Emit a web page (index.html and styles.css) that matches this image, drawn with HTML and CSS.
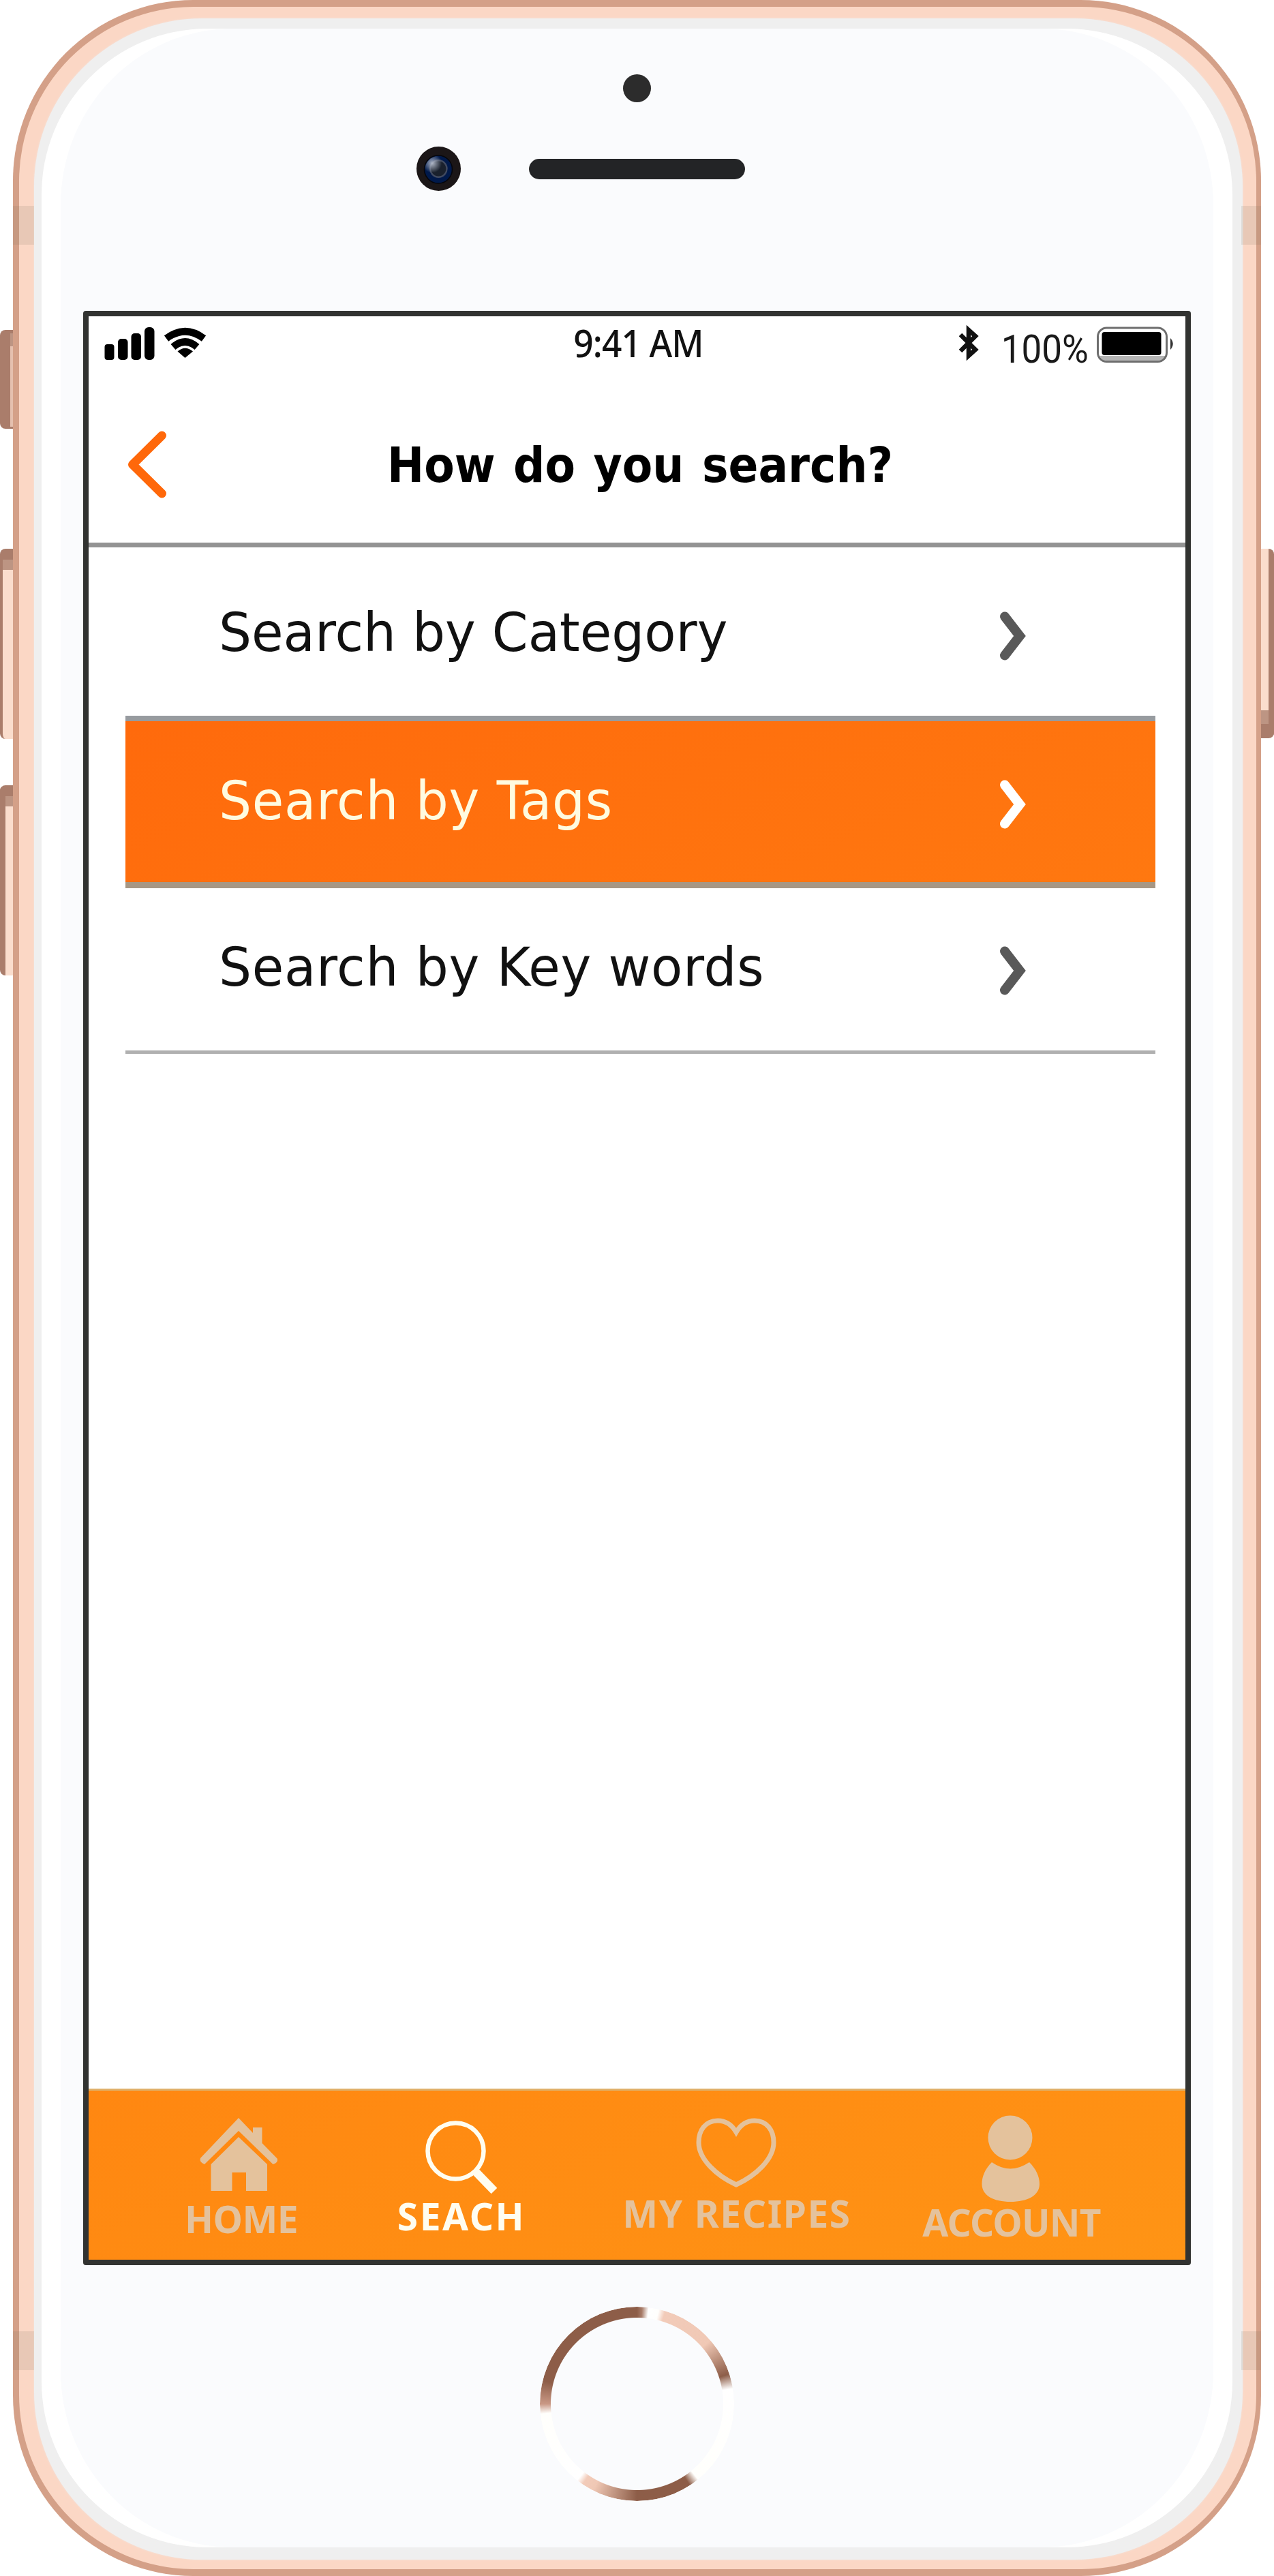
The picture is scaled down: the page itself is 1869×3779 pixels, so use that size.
FILE: index.html
```
<!DOCTYPE html>
<html lang="en">
<head>
<meta charset="utf-8">
<title>How do you search?</title>
<link rel="stylesheet" href="styles.css">
</head>
<body>
<div class="device">
  <span class="key key-mute"></span>
  <span class="key key-up"></span>
  <span class="key key-down"></span>
  <span class="key key-power"></span>
  <div class="frame">
    <div class="metal">
      <div class="bezel">
        <div class="glass">
          <div class="face">
            <div class="top-hardware">
              <span class="sensor"></span>
              <div class="ear-row">
                <svg class="camera" viewBox="0 0 65 65">
                  <defs>
                    <radialGradient id="glint" cx="0.27" cy="0.27" r="0.36">
                      <stop offset="0" stop-color="#b4bccb" stop-opacity=".95"/>
                      <stop offset="1" stop-color="#b4bccb" stop-opacity="0"/>
                    </radialGradient>
                  </defs>
                  <circle cx="32.5" cy="32.5" r="32.5" fill="#1b1617"/>
                  <circle cx="32" cy="33.5" r="20.5" fill="#00194a" stroke="#05060c" stroke-width="1.6"/>
                  <circle cx="32.3" cy="32.5" r="12.2" fill="#1a212d" stroke="#414a5f" stroke-width="2.4"/>
                  <circle cx="32" cy="33.5" r="19.6" fill="url(#glint)"/>
                </svg>
                <span class="speaker"></span>
              </div>
            </div>

            <main class="screen">
              <div class="status">
                <svg class="signal" viewBox="0 0 152 50">
                  <g fill="#000">
                    <rect x="0.5" y="26" width="14" height="23" rx="4"/>
                    <rect x="20" y="18" width="14.500" height="31" rx="5"/>
                    <rect x="39.500" y="10" width="14.500" height="39" rx="5"/>
                    <rect x="59" y="1" width="14.500" height="48" rx="6"/>
                    <path d="M118.500 46 L107.500 36.500 Q118.500 27 130 36.500 Z"/>
                  </g>
                  <g fill="none" stroke="#000" stroke-width="10.500">
                    <path d="M91 17.500 Q118.500 -3 146 17.500"/>
                    <path d="M101 30 Q118.500 15 136 30"/>
                  </g>
                </svg>
                <span class="time">9:41 AM</span>
                <div class="power">
                  <svg class="bluetooth" viewBox="0 0 30 52">
                    <path d="M3 14 L25 36 L15 45 V7 L25 16 L3 38" fill="none" stroke="#111" stroke-width="6.500"/>
                  </svg>
                  <span class="percent">100%</span>
                  <svg class="battery" viewBox="0 0 116 54">
                    <path d="M4 43 H102 Q98 51 90 51 H16 Q8 51 4 43Z" fill="#b5b5b5"/>
                    <rect x="1.500" y="2" width="101" height="49.500" rx="13" fill="none" stroke="#6e6e6e" stroke-width="3"/>
                    <rect x="7.500" y="8" width="87" height="34" rx="4" fill="#000"/>
                    <path d="M108 17 Q115.500 25.500 108 34Z" fill="#333"/>
                  </svg>
                </div>
              </div>

              <header class="header">
                <svg class="back" viewBox="0 0 60 100">
                  <path d="M51.500 7 L8.500 49.500 L51.500 92" fill="none" stroke="#ff680a" stroke-width="13" stroke-linecap="round" stroke-linejoin="round"/>
                </svg>
                <h1 class="title">How do you search?</h1>
              </header>

              <nav class="list">
                <a class="row first">
                  <span class="row-label">Search by Category</span>
                  <svg class="chevron" viewBox="0 0 42 74"><path d="M8 8.500 L30 37 L8 65.500"/></svg>
                </a>
                <a class="row selected">
                  <span class="row-label tight">Search by Tags</span>
                  <svg class="chevron" viewBox="0 0 42 74"><path d="M8 8.500 L30 37 L8 65.500"/></svg>
                </a>
                <a class="row last">
                  <span class="row-label tight">Search by Key words</span>
                  <svg class="chevron" viewBox="0 0 42 74"><path d="M8 8.500 L30 37 L8 65.500"/></svg>
                </a>
              </nav>

              <nav class="tabs">
                <a class="tab home">
                  <svg class="tab-icon" viewBox="0 0 120 120">
                    <g fill="currentColor">
                      <path d="M56 7 L77 29 V21 H90.500 V44 L113 67 Q114 73 106.500 75 L56 26 L6 75 Q-2 72 0 66 Z"/>
                      <path d="M56 35 L98 75 V114 H67 V87 H46.500 V114 H15.500 V75 Z"/>
                    </g>
                  </svg>
                  <span class="tab-label">HOME</span>
                </a>
                <a class="tab search">
                  <svg class="tab-icon" viewBox="0 0 120 120">
                    <g fill="none" stroke="currentColor">
                      <circle cx="51.500" cy="55.500" r="41" stroke-width="6.500"/>
                      <path d="M79 84 L108 114" stroke-width="12"/>
                    </g>
                  </svg>
                  <span class="tab-label">SEACH</span>
                </a>
                <a class="tab recipes">
                  <svg class="tab-icon" viewBox="0 0 120 120">
                    <path d="M59 28 C52 16 43 11 32 11 C14 11 4 25 4 43 C4 68 31 92 59 105 C87 92 114 68 114 43 C114 25 104 11 86 11 C75 11 66 16 59 28Z" fill="none" stroke="currentColor" stroke-width="7"/>
                  </svg>
                  <span class="tab-label">MY RECIPES</span>
                </a>
                <a class="tab account">
                  <svg class="tab-icon" viewBox="0 0 120 120">
                    <g fill="currentColor">
                      <circle cx="58" cy="36" r="32.500"/>
                      <path d="M31 72 Q58 91 86 72 C96 82 101 93 101 104 C101 121 83 130 58.500 130 C34 130 16.500 121 16.500 104 C16.500 93 21 82 31 72Z"/>
                    </g>
                  </svg>
                  <span class="tab-label">ACCOUNT</span>
                </a>
              </nav>
            </main>

            <div class="chin"><span class="home-button"></span></div>
          </div>
        </div>
      </div>
    </div>
    <span class="band band-tl"></span>
    <span class="band band-tr"></span>
    <span class="band band-bl"></span>
    <span class="band band-br"></span>
  </div>
</div>
</body>
</html>
```
FILE: styles.css
```
* { box-sizing: border-box; }

body {
  margin: 0;
  background: #fff;
  font-family: "Noto Sans", "DejaVu Sans", sans-serif;
}

svg { display: block; overflow: visible; flex: none; }

/* ---------- Device shell ---------- */

.device {
  position: relative;
  width: 1869px;
  height: 3779px;
  padding: 0 19px;
}

.frame {
  position: relative;
  height: 3779px;
  padding: 10px 7px 10px 9px;
  border-radius: 265px;
  background: #d4a088;
}

.metal {
  height: 100%;
  padding: 17px 20px 14px 22px;
  border-radius: 256px;
  background: #fbd7c5;
}

.bezel {
  height: 100%;
  padding: 15px 15px 18px 11px;
  border-radius: 246px;
  background: #efefef;
  box-shadow: 0 0 3px #f3e4dd;
}

.glass {
  height: 100%;
  padding: 0 28px;
  border-radius: 243px;
  background: #fff;
}

.face {
  display: flex;
  flex-direction: column;
  height: 100%;
  border-radius: 252px / 258px;
  background: #fafbfd;
}

.band {
  position: absolute;
  width: 31px;
  height: 57px;
  background: rgba(120, 110, 90, .14);
}

.band-tl { left: 0; top: 302px; }
.band-tr { right: 0; top: 302px; width: 29px; }
.band-bl { left: 0; top: 3420px; }
.band-br { right: 0; top: 3420px; width: 29px; }

.key {
  position: absolute;
  background: #faddcd;
  border: 0 solid #aa7d6b;
}

.key-mute {
  left: 0;
  top: 484px;
  width: 19px;
  height: 145px;
  border-width: 5px 0 3px 15px;
  border-radius: 8px 0 0 8px;
  background: linear-gradient(#bd9583 19px, #e5c0af 19px);
}

.key-up,
.key-down {
  left: 0;
  width: 19px;
  height: 279px;
  border-top-width: 16px;
  border-left-width: 4px;
  border-radius: 8px 0 0 8px;
  background: linear-gradient(#bd9583 15px, #faddcd 15px);
}

.key-up { top: 805px; }

.key-down { top: 1152px; border-left-width: 8px; }

.key-power {
  right: 0;
  top: 805px;
  width: 19px;
  height: 278px;
  border-width: 0 8px 21px 0;
  border-radius: 0 8px 8px 0;
  background: linear-gradient(#faddcd 237px, #bd9583 237px);
}

/* ---------- Sensors and speaker ---------- */

.top-hardware {
  height: 414px;
  padding-top: 67px;
}

.sensor {
  display: block;
  width: 41px;
  height: 41px;
  margin: 0 auto;
  border-radius: 50%;
  background: #2c2c2c;
}

.ear-row {
  display: flex;
  align-items: center;
  gap: 100px;
  margin: 65px 0 0 522px;
}

.camera { width: 65px; height: 65px; }

.speaker {
  width: 317px;
  height: 30px;
  border-radius: 15px;
  background: #232426;
}

/* ---------- Screen ---------- */

.screen {
  display: flex;
  flex-direction: column;
  width: 1625px;
  height: 2867px;
  margin-left: 33px;
  border: 8px solid #323331;
  border-radius: 4px;
  background: #fff;
}

.status {
  display: grid;
  grid-template-columns: 1fr auto 1fr;
  align-items: start;
  height: 80px;
  padding: 0 14px 0 23px;
}

.signal {
  width: 152px;
  height: 50px;
  margin-top: 15px;
}

.time {
  margin: -2px 5px 0 0;
  font-size: 56px;
  font-weight: 500;
  line-height: 80px;
  letter-spacing: -1px;
  color: #111;
  white-space: nowrap;
  transform: scaleX(.92);
}

.power {
  display: flex;
  justify-content: flex-end;
  align-items: flex-start;
}

.bluetooth {
  width: 30px;
  height: 52px;
  margin-top: 13px;
}

.percent {
  margin: 9px 12px 0 23px;
  font-family: Roboto, sans-serif;
  font-size: 57px;
  line-height: 80px;
  color: #1a1a1a;
  transform: scaleX(.93);
  transform-origin: right;
}

.battery {
  width: 116px;
  height: 54px;
  margin-top: 15px;
}

.header {
  display: flex;
  align-items: center;
  height: 259px;
  padding: 24px 0 0 56px;
  border-bottom: 7px solid #939393;
}

.back { width: 60px; height: 100px; }

.title {
  margin: 0 0 0 322px;
  font-family: "DejaVu Sans Condensed", "DejaVu Sans", sans-serif;
  font-size: 72px;
  font-stretch: condensed;
  font-weight: 700;
  line-height: 100px;
  word-spacing: 4px;
  color: #000;
  white-space: nowrap;
}

.list {
  margin: 0 44px 0 54px;
  font-family: "DejaVu Sans", Verdana, sans-serif;
}

.row {
  display: flex;
  align-items: center;
  justify-content: space-between;
  height: 247px;
  padding: 0 187px 0 137px;
  color: #111;
}

.row-label {
  margin-top: -3px;
  font-size: 78px;
  line-height: 100px;
  white-space: nowrap;
  transform: scaleX(.97);
  transform-origin: left;
}

.row-label.tight { letter-spacing: .7px; }

.row.first {
  height: 255px;
  padding-top: 5px;
  border-bottom: 8px solid #979b9f;
}

.row.selected {
  height: 245px;
  border-bottom: 9px solid #a79784;
  background: linear-gradient(155deg, #ff6a0c, #ff7810);
  color: #fffbe0;
}

.row.last {
  height: 243px;
  padding-bottom: 4px;
  border-bottom: 5px solid #b0b0b0;
}

.chevron {
  width: 42px;
  height: 74px;
  margin-top: 7px;
  fill: none;
  stroke: #595959;
  stroke-width: 14px;
  stroke-linecap: round;
}

.selected .chevron { stroke: #fff; }

/* ---------- Tab bar ---------- */

.tabs {
  display: grid;
  grid-template-columns: 448px 198px 610px 196px;
  height: 251px;
  margin-top: auto;
  padding-top: 33px;
  border-top: 3px solid #dfb06a;
  background: linear-gradient(155deg, #ff8711, #ff9415);
}

.tab {
  display: flex;
  flex-direction: column;
  align-items: center;
  color: #e4c29c;
}

.tab-icon { width: 120px; height: 120px; }

.tab-label {
  margin-top: 5px;
  font-size: 55px;
  font-weight: 700;
  line-height: 60px;
  white-space: nowrap;
}

.home .tab-label { letter-spacing: -.6px; }

.search { color: #fffdf0; }

.search .tab-label { margin-top: 1px; letter-spacing: 2.6px; }

.recipes .tab-label { margin-top: -3px; letter-spacing: 1.6px; }

.account .tab-label { margin-top: 10px; letter-spacing: -.8px; }

/* ---------- Home button ---------- */

.chin { padding-top: 61px; }

.home-button {
  display: block;
  width: 285px;
  height: 285px;
  margin: 0 auto;
  border-radius: 50%;
  background: conic-gradient(
    #8d5d48 0deg, #a87c69 3deg, #fff 7deg, #fffefc 13deg,
    #f2cbb9 17deg, #f0c8b5 49deg, #8d5d48 72deg, #fff 81deg,
    #fffffc 141deg, #8d5d48 147deg, #8d5d48 180deg,
    #f0c8b5 207deg, #f2cbb9 214deg, #fff 218deg, #fffffc 264deg,
    #c99885 270deg, #8d5d48 284deg, #8d5d48 360deg);
  -webkit-mask: radial-gradient(circle, transparent 126px, #000 127px);
  mask: radial-gradient(circle, transparent 126px, #000 127px);
}
```
